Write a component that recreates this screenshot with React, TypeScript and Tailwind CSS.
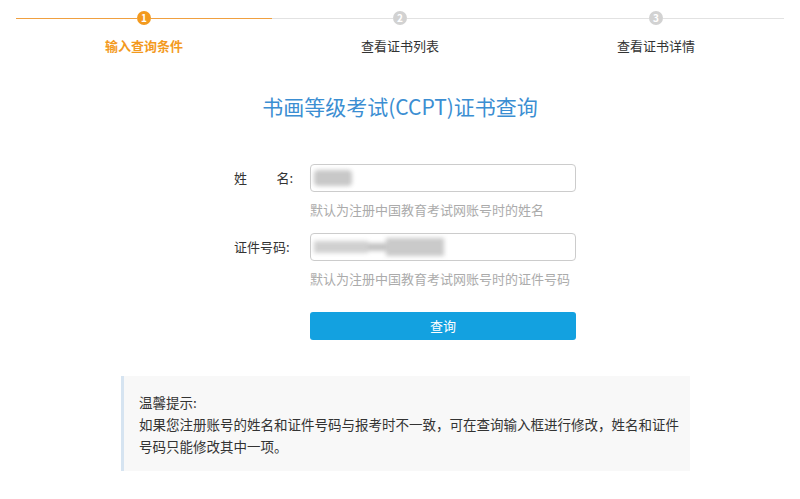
import React from 'react';

const steps = [
  { n: 1, label: '输入查询条件', active: true },
  { n: 2, label: '查看证书列表', active: false },
  { n: 3, label: '查看证书详情', active: false },
];

const font = { fontFamily: '"Noto Sans CJK SC", "Noto Sans", sans-serif' };

export default function App() {
  return (
    <div className="w-[800px] h-[499px] bg-white text-[#333]" style={font}>
      {/* steps */}
      <div className="flex px-4 pt-[11px]">
        {steps.map((s) => (
          <div key={s.n} className="flex-1 flex flex-col items-center">
            <div className="flex items-center w-full h-[14px]">
              <div className={`flex-1 h-px ${s.active ? 'bg-[#f0a040]' : 'bg-[#e2e2e2]'}`} />
              <div
                className={`w-[14px] h-[14px] rounded-full flex items-center justify-center text-[10px] font-bold text-white leading-none ${
                  s.active ? 'bg-[#f39a1e]' : 'bg-[#d2d2d2]'
                }`}
              >
                {s.n}
              </div>
              <div className={`flex-1 h-px ${s.active ? 'bg-[#f0a040]' : 'bg-[#e2e2e2]'}`} />
            </div>
            <div
              className={`mt-[12px] text-[13px] leading-[18px] ${
                s.active ? 'text-[#f39a1e] font-bold' : 'text-[#333]'
              }`}
            >
              {s.label}
            </div>
          </div>
        ))}
      </div>

      {/* title */}
      <h1 className="mt-[37px] text-center text-[21px] leading-[28px] text-[#3b8ed2]">
        书画等级考试(CCPT)证书查询
      </h1>

      {/* form */}
      <div className="mt-[44px] ml-[234px] flex flex-col">
        <div className="flex items-center">
          <label className="w-[76px] text-[13px] flex justify-between pr-[17px]">
            <span>姓</span>
            <span>名:</span>
          </label>
          <div className="w-[266px] h-[28px] border border-[#ccc] rounded-[4px] flex items-center px-[3px]">
            <div className="w-[38px] h-[16px] bg-[#c8c8c8] blur-[2px] rounded-sm" />
          </div>
        </div>
        <div className="ml-[76px] mt-[9px] text-[13px] leading-[18px] text-[#ababab]">
          默认为注册中国教育考试网账号时的姓名
        </div>

        <div className="flex items-center mt-[14px]">
          <label className="w-[76px] text-[13px]">证件号码:</label>
          <div className="w-[266px] h-[28px] border border-[#ccc] rounded-[4px] flex items-center px-[3px]">
            <div className="flex items-center blur-[2px]">
              <div className="w-[54px] h-[12px] bg-[#d0d0d0]" />
              <div className="w-[18px] h-[8px] bg-[#c4c4c4]" />
              <div className="w-[58px] h-[18px] bg-[#cacaca]" />
            </div>
          </div>
        </div>
        <div className="ml-[76px] mt-[9px] text-[13px] leading-[18px] text-[#ababab]">
          默认为注册中国教育考试网账号时的证件号码
        </div>

        <button className="ml-[76px] mt-[24px] w-[266px] h-[28px] rounded-[3px] bg-[#13a1e0] text-white text-[13px]">
          查询
        </button>
      </div>

      {/* tip */}
      <div className="mt-[36px] ml-[121px] w-[569px] bg-[#f8f8f8] border-l-[3px] border-[#d6e4f1] pl-[15px] pt-[15px] pb-[14px]">
        <div className="w-[546px] text-[13.5px] leading-[22px] text-[#333]">
          <div>温馨提示:</div>
          <div>如果您注册账号的姓名和证件号码与报考时不一致，可在查询输入框进行修改，姓名和证件号码只能修改其中一项。</div>
        </div>
      </div>
    </div>
  );
}
